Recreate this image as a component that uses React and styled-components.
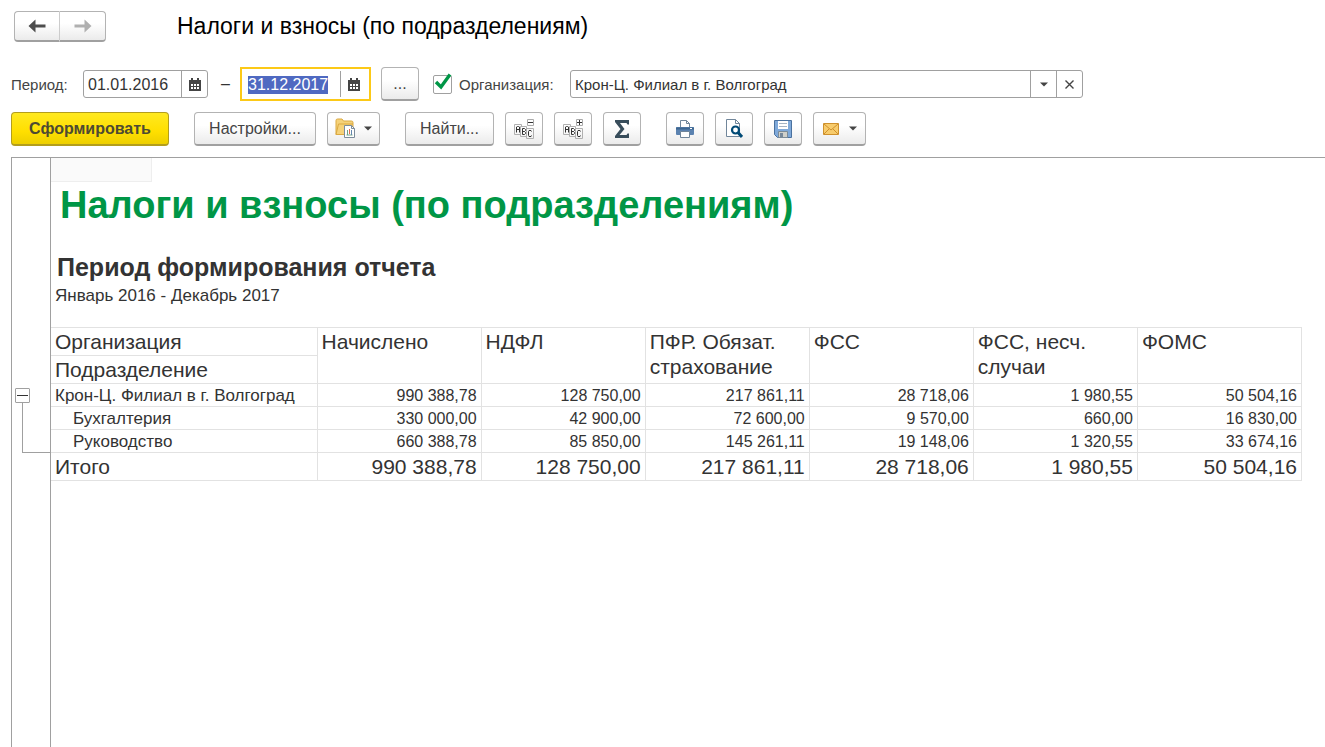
import React, { useEffect, useRef, useState } from 'react'
import styled, { createGlobalStyle } from 'styled-components'

const GlobalStyle = createGlobalStyle`
    * { box-sizing: border-box; }
    body {
        margin: 0;
        background: #fff;
        color: #333;
        font-family: "Liberation Sans", Arial, sans-serif;
        font-size: 16px;
    }
    button, input { font: inherit; color: inherit; }
`
const Page = styled.div`
    min-height: 100vh;
    display: flex;
    flex-direction: column;
    padding-left: 11px;
`
const Header = styled.header`
    display: flex;
    align-items: center;
    gap: 71px;
    padding: 11px 3px 0;
`
const Title = styled.h1`
    margin: 0;
    font-size: 23px;
    line-height: 28px;
    padding-bottom: 2px;
    font-weight: 400;
    color: #000;
`
const Button = styled.button`
    display: flex;
    align-items: center;
    justify-content: center;
    flex: none;
    width: ${p => p.$width || 38}px;
    height: 34px;
    padding: 0;
    gap: ${p => p.$gap || 0}px;
    color: #444;
    background: linear-gradient(#fff 40%, #ebebeb);
    border: 1px solid #b3b3b3;
    border-bottom: 2px solid #a0a0a0;
    border-radius: 4px;
`
const NavGroup = styled.nav`
    display: flex;
`
const NavButton = styled(Button)`
    width: 46px;
    height: 31px;
    &:first-child { border-radius: 4px 0 0 4px; border-right-color: #ccc; }
    &:last-child { border-radius: 0 4px 4px 0; border-left: 0; }
`
const MainButton = styled(Button)`
    font-weight: 700;
    color: #4d4a33;
    background: linear-gradient(#ffe920, #ffdf00 60%, #edcf00);
    border-color: #b39e1c;
`
const Filters = styled.div`
    display: flex;
    align-items: center;
    height: 34px;
    margin-top: 25px;
    padding-right: 20px;
`
const Label = styled.label`
    flex: none;
    width: ${p => p.$width}px;
    color: #444;
    font-size: 15px;
`
const Field = styled.div`
    display: flex;
    height: 28px;
    width: 125px;
    border: 1px solid #a0a0a0;
    border-radius: 3px;
    background: #fff;
    &:focus-within {
        width: 131px;
        height: 34px;
        padding: 2px 3px;
        border: 2px solid #fcc917;
        border-radius: 0;
    }
`
const Combo = styled(Field)`
    flex: 1;
    max-width: 513px;
    font-size: 15px;
`
const Input = styled.input`
    flex: 1;
    min-width: 0;
    padding: 1px 4px 0;
    border: 0;
    outline: 0;
    background: none;
    ${Field}:focus-within & { padding: 1px 3px 0; }
    &::selection { background: #4f69c1; color: #fff; }
`
const FieldButton = styled.button`
    display: flex;
    align-items: center;
    justify-content: center;
    width: 26px;
    padding: 0;
    border: 0;
    border-left: 1px solid #a0a0a0;
    background: none;
`
const Dash = styled.span`
    width: 32px;
    padding-left: 3px;
    text-align: center;
`
const MoreButton = styled(Button)`
    margin: 0 14px 0 10px;
`
const Check = styled.span`
    position: relative;
    width: 19px;
    height: 19px;
    margin-right: 7px;
    input {
        appearance: none;
        display: block;
        width: 19px;
        height: 19px;
        margin: 0;
        border: 1px solid #a0a0a0;
        border-radius: 2px;
    }
    svg {
        position: absolute;
        left: 1px;
        top: -2px;
        pointer-events: none;
        display: none;
    }
    input:checked + svg { display: block; }
`
const Toolbar = styled.div`
    display: flex;
    gap: 25px;
    margin: 11px 0;
`
const Group = styled.div`
    display: flex;
    gap: 11px;
`
const Report = styled.main`
    flex: 1;
    display: flex;
    border-top: 1px solid #a0a0a0;
    border-left: 1px solid #a0a0a0;
`
const Gutter = styled.div`
    flex: none;
    width: 39px;
    padding: 230px 0 0 3px;
    border-right: 1px solid #a0a0a0;
`
const Toggle = styled.button`
    display: flex;
    align-items: center;
    justify-content: center;
    width: 15px;
    height: 15px;
    padding: 0;
    border: 1px solid #a0a0a0;
    border-radius: 1px;
    background: #fff;
`
const Bracket = styled.div`
    height: 50px;
    margin-left: 7px;
    border: solid #a0a0a0;
    border-width: 0 0 1px 1px;
`
const Sheet = styled.div`
    flex: 1;
    padding-right: 23px;
`
const Corner = styled.div`
    width: 101px;
    height: 24px;
    background: #fafafa;
    border: solid #eee;
    border-width: 0 1px 1px 0;
`
const ReportTitle = styled.h2`
    margin: 0 0 24px 9px;
    font-size: 38px;
    line-height: 47px;
    color: #009646;
`
const PeriodTitle = styled.h3`
    margin: 0 0 0 6px;
    font-size: 25px;
    line-height: 28px;
`
const PeriodText = styled.p`
    margin: 0 0 17px 4px;
    font-size: 17px;
    line-height: 29px;
`
const Table = styled.table`
    width: 100%;
    table-layout: fixed;
    border-collapse: collapse;
    th, td {
        padding: 1px 4px 0;
        border: 1px solid #e2e2e2;
        text-align: right;
        font-weight: 400;
        white-space: nowrap;
    }
    th { text-align: left; }
    th:first-child { border-left: 0; }
    thead th {
        height: 28px;
        font-size: 21px;
        line-height: 25px;
        vertical-align: top;
        white-space: normal;
    }
    tbody tr { height: 23px; line-height: 20px; }
    tbody th { font-size: 17px; }
    tfoot tr { height: 28px; font-size: 21px; line-height: 24px; }
`
const NameCol = styled.col`
    width: 266px;
`
const RowName = styled.th`
    && { padding-left: ${p => (p.$nested ? 22 : 4)}px; }
`

const Arrow = ({ right, color }) => (
    <svg width="18" height="14" viewBox="0 0 18 14">
        <path transform={right ? 'matrix(-1 0 0 1 18 0)' : undefined} fill={color} d="M0.5 7 7.5 0.5V5.5H17.5V8.5H7.5V13.5Z" />
    </svg>
)
const Caret = () => (
    <svg width="8" height="5" viewBox="0 0 8 5"><path d="M0 0.5h8L4 4.5Z" fill="#444" /></svg>
)
const CalendarIcon = () => (
    <svg width="12" height="13" viewBox="0 0 12 13" shapeRendering="crispEdges">
        <path d="M0 2h12v11H0z" fill="#444" />
        <path d="M2 0h2v2H2zM8 0h2v2H8z" fill="#444" />
        <path d="M2 6h2v2H2zM5 6h2v2H5zM8 6h2v2H8zM2 9h2v2H2zM5 9h2v2H5zM8 9h2v2H8z" fill="#fff" />
    </svg>
)
const CloseIcon = () => (
    <svg width="9" height="9" viewBox="0 0 9 9"><path d="M0.5 0.5l8 8M8.5 0.5l-8 8" stroke="#444" strokeWidth="1.4" /></svg>
)
const CheckIcon = () => (
    <svg width="18" height="17" viewBox="0 0 18 17"><path d="M2 9 7 14 16 1.5" fill="none" stroke="#009646" strokeWidth="3.4" /></svg>
)
const FolderIcon = () => (
    <svg width="21" height="21" viewBox="0 0 21 21">
        <path d="M1 16.5V2.5Q1 1 2.5 1H7l1.5 2H16.5Q18 3 18 4.5V16.5Z" fill="#f5d27a" stroke="#dba941" />
        <path d="M1 16.5 3.5 6H18" fill="none" stroke="#dba941" />
        <path d="M9.5 7.5h7l3 3v9h-10z" fill="#fff" stroke="#7c8c9b" />
        <path d="M16.5 7.5v3h3" fill="none" stroke="#7c8c9b" />
        <path d="M12.5 12v5M11.5 17h6" stroke="#70a586" />
        <path d="M14.5 11v5" stroke="#e06a50" />
        <path d="M16.5 12v5" stroke="#6487ad" />
    </svg>
)
const LettersIcon = ({ plus }) => (
    <svg width="20" height="20" viewBox="0 0 20 20" fill="none">
        <path d="M6.5 15.5h-6v-10h7v2M12.5 17.5h-6v-10h6zM12.5 9.5h7v10h-7z" stroke="#b0b0b0" />
        <path d="M2.5 13.5V8l1-.5h1l1 .5v5.5M2.5 10.5h3" stroke="#333" />
        <path d="M8.5 9.5v6h2l1-1v-1l-1-1 1-1v-1l-1-1zM8.5 12.5h2" stroke="#333" />
        <path d="M17.5 12.5l-.5-1h-2l-.5 1v4l.5 1h2l.5-1" stroke="#333" />
        <path d="M13.5 .5h6v6h-6z" stroke="#aaa" />
        <path d={plus ? 'M14 3.5h5M16.5 1v5' : 'M14 3.5h5'} stroke="#333" />
    </svg>
)
const SigmaIcon = () => (
    <svg width="14" height="18" viewBox="0 0 14 18"><path d="M0 0h14v4.5h-1.5L11.5 3H5l4.5 6L4.5 15h7l1-1.5H14V18H0v-2l5.5-7L0 2Z" fill="#384d5b" /></svg>
)
const PrintIcon = () => (
    <svg width="18" height="18" viewBox="0 0 18 18">
        <path d="M4.5 8V.5h6l3 3V8" fill="#fff" stroke="#71869a" />
        <path d="M10.5 .5v3h3" fill="none" stroke="#71869a" />
        <rect y="7" width="18" height="8" rx="1" fill="#5b82b0" />
        <path d="M0 7.5h18v2H0z" fill="#3d6690" />
        <path d="M14 8.5h2" stroke="#fff" />
        <path d="M4.5 11.5h9v6h-9z" fill="#fff" stroke="#71869a" />
    </svg>
)
const PreviewIcon = () => (
    <svg width="17" height="19" viewBox="0 0 17 19">
        <path d="M.5 .5h9l4 4v13H.5z" fill="#fff" stroke="#71869a" />
        <path d="M9.5 .5v4h4" fill="none" stroke="#71869a" />
        <circle cx="9.5" cy="11" r="3.5" fill="#fff" stroke="#004a76" strokeWidth="2.2" />
        <path d="m12 13.5 4 4.5" stroke="#004a76" strokeWidth="3" />
    </svg>
)
const SaveIcon = () => (
    <svg width="18" height="18" viewBox="0 0 18 18">
        <path d="M.5 .5h17v17h-14l-3-3z" fill="#7fa9da" stroke="#4a719e" />
        <path d="M4 1h10v8H4z" fill="#fff" />
        <path d="M5 3.5h8M5 6.5h8" stroke="#a5b4c4" />
        <path d="M4.5 11.5h9v6h-9z" fill="#d0d0ca" stroke="#7b8b98" />
        <path d="M6 13h3v4H6z" fill="#77889a" />
    </svg>
)
const MailIcon = () => (
    <svg width="16" height="12" viewBox="0 0 16 12">
        <path d="M.5 .5h15v11H.5z" fill="#f8cc6c" stroke="#cf912d" />
        <path d="m1 1 7 6 7-6M1 11l5-5M15 11l-5-5" fill="none" stroke="#cf912d" />
    </svg>
)

const columns = ['Начислено', 'НДФЛ', 'ПФР. Обязат. страхование', 'ФСС', 'ФСС, несч. случаи', 'ФОМС']
const total = ['990 388,78', '128 750,00', '217 861,11', '28 718,06', '1 980,55', '50 504,16']
const rows = [
    { name: 'Крон-Ц. Филиал в г. Волгоград', values: total },
    { name: 'Бухгалтерия', nested: true, values: ['330 000,00', '42 900,00', '72 600,00', '9 570,00', '660,00', '16 830,00'] },
    { name: 'Руководство', nested: true, values: ['660 388,78', '85 850,00', '145 261,11', '19 148,06', '1 320,55', '33 674,16'] },
]

const App = () => {
    const [open, setOpen] = useState(true)
    const dateTo = useRef(null)

    useEffect(() => {
        dateTo.current.focus()
        dateTo.current.select()
    }, [])

    return (
        <Page>
            <GlobalStyle />
            <Header>
                <NavGroup>
                    <NavButton aria-label="Назад"><Arrow color="#4d4d4d" /></NavButton>
                    <NavButton aria-label="Вперед"><Arrow right color="#b0b0b0" /></NavButton>
                </NavGroup>
                <Title>Налоги и взносы (по подразделениям)</Title>
            </Header>
            <Filters>
                <Label htmlFor="from" $width={72}>Период:</Label>
                <Field>
                    <Input id="from" defaultValue="01.01.2016" />
                    <FieldButton aria-label="Выбрать начало"><CalendarIcon /></FieldButton>
                </Field>
                <Dash>–</Dash>
                <Field>
                    <Input ref={dateTo} aria-label="Конец периода" defaultValue="31.12.2017" />
                    <FieldButton aria-label="Выбрать конец"><CalendarIcon /></FieldButton>
                </Field>
                <MoreButton>...</MoreButton>
                <Check>
                    <input type="checkbox" id="useOrg" defaultChecked />
                    <CheckIcon />
                </Check>
                <Label htmlFor="useOrg" $width={111}>Организация:</Label>
                <Combo>
                    <Input aria-label="Организация" defaultValue="Крон-Ц. Филиал в г. Волгоград" />
                    <FieldButton aria-label="Выбрать"><Caret /></FieldButton>
                    <FieldButton aria-label="Очистить"><CloseIcon /></FieldButton>
                </Combo>
            </Filters>
            <Toolbar>
                <MainButton $width={158}>Сформировать</MainButton>
                <Group>
                    <Button $width={122}>Настройки...</Button>
                    <Button $width={53} $gap={8} aria-label="Варианты отчета"><FolderIcon /><Caret /></Button>
                </Group>
                <Group>
                    <Button $width={89}>Найти...</Button>
                    <Button aria-label="Свернуть группы"><LettersIcon /></Button>
                    <Button aria-label="Развернуть группы"><LettersIcon plus /></Button>
                    <Button aria-label="Сумма"><SigmaIcon /></Button>
                </Group>
                <Group>
                    <Button aria-label="Печать"><PrintIcon /></Button>
                    <Button aria-label="Просмотр"><PreviewIcon /></Button>
                    <Button aria-label="Сохранить"><SaveIcon /></Button>
                    <Button $width={53} $gap={10} aria-label="Отправить"><MailIcon /><Caret /></Button>
                </Group>
            </Toolbar>
            <Report>
                <Gutter>
                    <Toggle aria-label="Группа" onClick={() => setOpen(!open)}>
                        <svg width="11" height="11" viewBox="0 0 11 11" shapeRendering="crispEdges">
                            <path d={open ? 'M0 5.5h11' : 'M0 5.5h11M5.5 0v11'} stroke="#333" />
                        </svg>
                    </Toggle>
                    {open && <Bracket />}
                </Gutter>
                <Sheet>
                    <Corner />
                    <ReportTitle>Налоги и взносы (по подразделениям)</ReportTitle>
                    <PeriodTitle>Период формирования отчета</PeriodTitle>
                    <PeriodText>Январь 2016 - Декабрь 2017</PeriodText>
                    <Table>
                        <colgroup>
                            <NameCol />
                            {columns.map(name => <col key={name} />)}
                        </colgroup>
                        <thead>
                            <tr>
                                <th>Организация</th>
                                {columns.map(name => <th key={name} rowSpan={2}>{name}</th>)}
                            </tr>
                            <tr><th>Подразделение</th></tr>
                        </thead>
                        <tbody>
                            {rows.filter(row => open || !row.nested).map(row => (
                                <tr key={row.name}>
                                    <RowName $nested={row.nested}>{row.name}</RowName>
                                    {row.values.map((value, i) => <td key={i}>{value}</td>)}
                                </tr>
                            ))}
                        </tbody>
                        <tfoot>
                            <tr>
                                <RowName>Итого</RowName>
                                {total.map((value, i) => <td key={i}>{value}</td>)}
                            </tr>
                        </tfoot>
                    </Table>
                </Sheet>
            </Report>
        </Page>
    )
}
export default App
